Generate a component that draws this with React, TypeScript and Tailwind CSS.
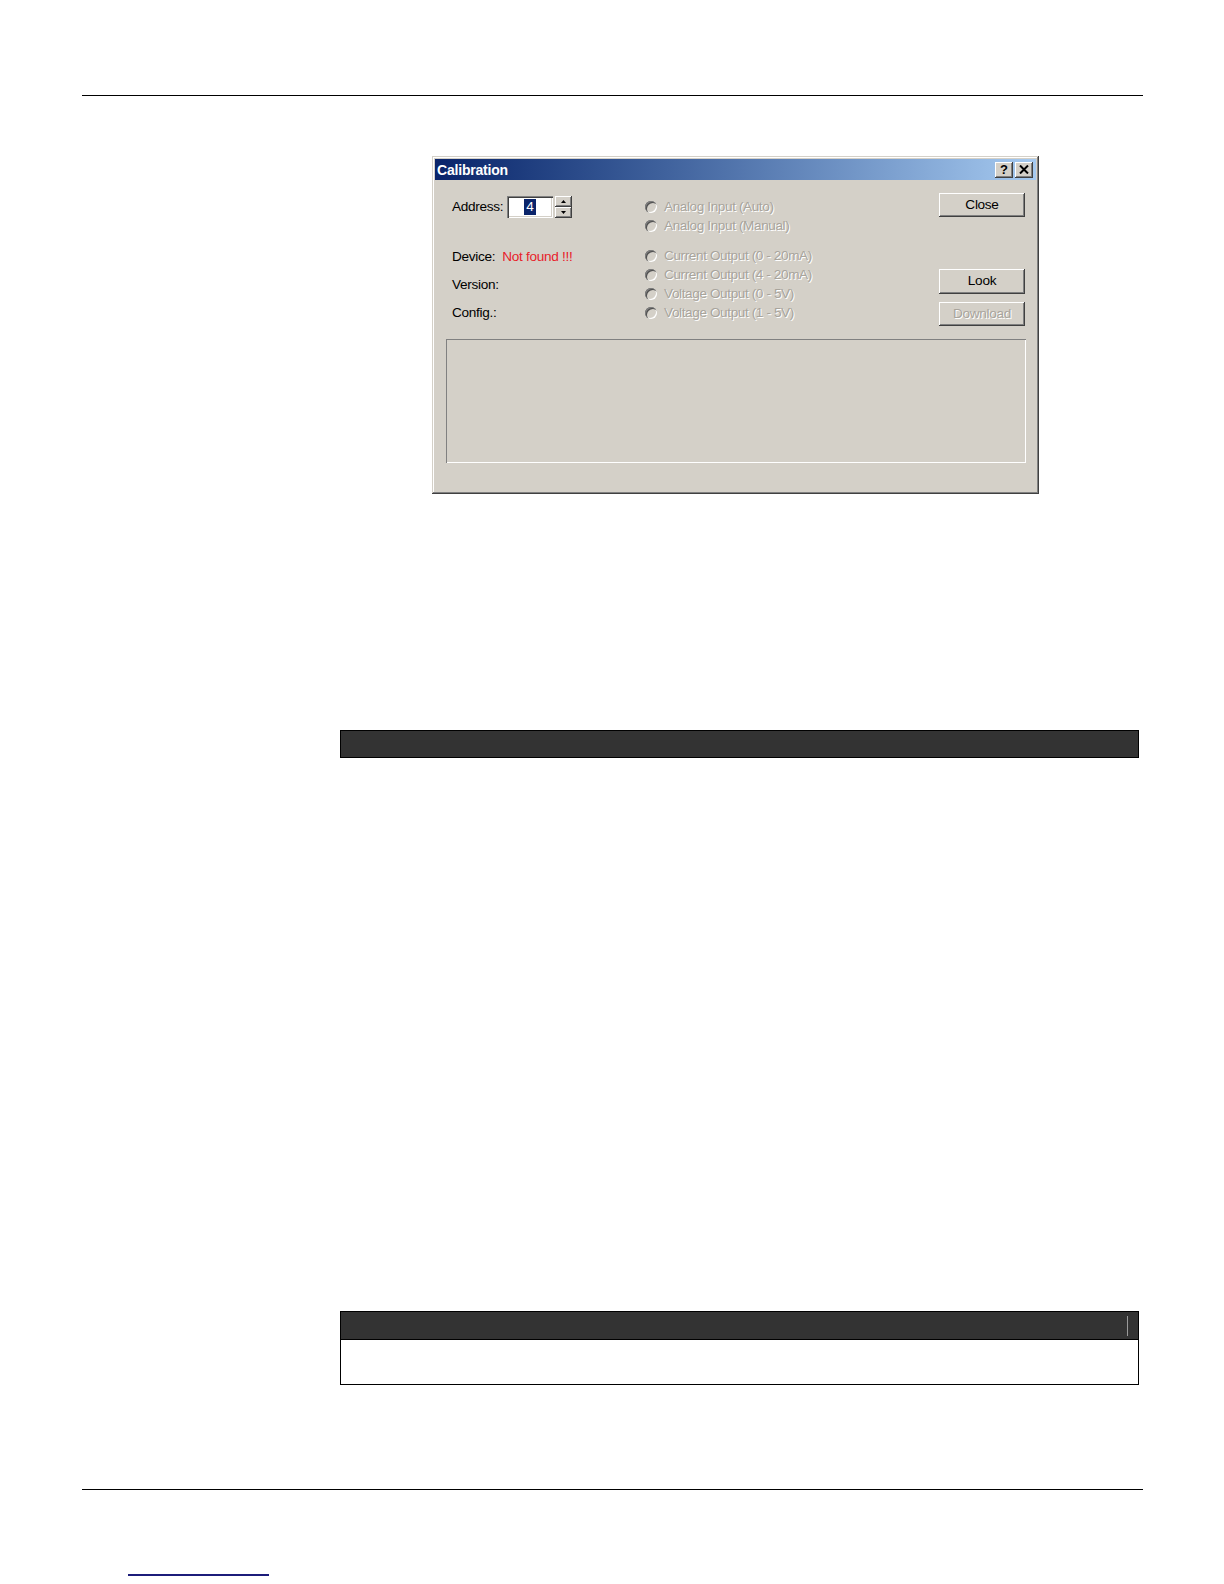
const RAISED =
  "shadow-[inset_-1px_-1px_#404040,inset_1px_1px_#ffffff,inset_-2px_-2px_#808080,inset_2px_2px_#d4d0c8]";

const RADIOS = [
  "Analog Input (Auto)",
  "Analog Input (Manual)",
  "Current Output (0 - 20mA)",
  "Current Output (4 - 20mA)",
  "Voltage Output (0 - 5V)",
  "Voltage Output (1 - 5V)",
];

function Radio({ label, className = "" }: { label: string; className?: string }) {
  return (
    <div className={`flex items-center h-[19px] gap-[7px] ${className}`}>
      <div className="w-[12px] h-[12px] rounded-full bg-[#d4d0c8] shadow-[inset_1px_1px_#808080,inset_2px_2px_#505050,inset_-1px_-1px_#ffffff]" />
      <span className="text-[13.6px] tracking-[-0.4px] leading-none text-[#a8a49c] [text-shadow:1px_1px_0_#ffffff]">
        {label}
      </span>
    </div>
  );
}

function WinButton({
  label,
  disabled,
  className = "",
}: {
  label: string;
  disabled?: boolean;
  className?: string;
}) {
  return (
    <div
      className={`w-[86px] h-[24px] bg-[#d4d0c8] flex items-center justify-center text-[13.6px] tracking-[-0.3px] ${RAISED} ${
        disabled ? "text-[#a8a49c] [text-shadow:1px_1px_0_#ffffff]" : "text-black"
      } ${className}`}
    >
      {label}
    </div>
  );
}

function CalibrationDialog() {
  return (
    <div className="mt-[60px] ml-[432px] w-[607px] h-[338px] bg-[#d4d0c8] p-[3px] flex flex-col shadow-[inset_-1px_-1px_#404040,inset_1px_1px_#d4d0c8,inset_-2px_-2px_#808080,inset_2px_2px_#ffffff]">
      {/* Title bar */}
      <div className="h-[21px] flex items-center justify-between pl-[2px] pr-[3px] bg-gradient-to-r from-[#0a246a] to-[#a6caf0]">
        <span className="text-white font-bold text-[14px] tracking-[-0.2px] leading-none">
          Calibration
        </span>
        <div className="flex gap-[2px]">
          <div
            className={`w-[18px] h-[16px] bg-[#d4d0c8] flex items-center justify-center text-[13px] font-bold leading-none ${RAISED}`}
          >
            ?
          </div>
          <div className={`w-[18px] h-[16px] bg-[#d4d0c8] flex items-center justify-center ${RAISED}`}>
            <svg width="10" height="9" viewBox="0 0 10 9">
              <path d="M1 0.5 L9 8.5 M9 0.5 L1 8.5" stroke="black" strokeWidth="2" />
            </svg>
          </div>
        </div>
      </div>

      {/* Controls */}
      <div className="h-[159px] flex items-start pl-[17px]">
        <div className="w-[193px] flex flex-col pt-[16px] text-[13.6px] tracking-[-0.3px] text-black">
          <div className="h-[22px] flex items-center">
            <span className="w-[55px]">Address:</span>
            <div className="w-[46px] h-[22px] bg-white flex items-center justify-center shadow-[inset_1px_1px_#808080,inset_2px_2px_#404040,inset_-1px_-1px_#ffffff,inset_-2px_-2px_#d4d0c8]">
              <span className="bg-[#0a246a] text-white px-[2px] leading-[16px]">4</span>
            </div>
            <div className="ml-[2px] w-[17px] h-[22px] flex flex-col">
              <div className={`h-[11px] bg-[#d4d0c8] flex items-center justify-center ${RAISED}`}>
                <svg width="5" height="3" viewBox="0 0 5 3">
                  <path d="M0 3 L2.5 0 L5 3 Z" fill="black" />
                </svg>
              </div>
              <div className={`h-[11px] bg-[#d4d0c8] flex items-center justify-center ${RAISED}`}>
                <svg width="5" height="3" viewBox="0 0 5 3">
                  <path d="M0 0 L2.5 3 L5 0 Z" fill="black" />
                </svg>
              </div>
            </div>
          </div>
          <div className="mt-[25px] h-[28px] flex items-center gap-[7px]">
            <span>Device:</span>
            <span className="text-[#e8202a]">Not found !!!</span>
          </div>
          <div className="h-[28px] flex items-center">Version:</div>
          <div className="h-[28px] flex items-center">Config.:</div>
        </div>

        <div className="w-[294px] flex flex-col pt-[17px]">
          <Radio label={RADIOS[0]} />
          <Radio label={RADIOS[1]} />
          <Radio label={RADIOS[2]} className="mt-[11px]" />
          <Radio label={RADIOS[3]} />
          <Radio label={RADIOS[4]} />
          <Radio label={RADIOS[5]} />
        </div>

        <div className="flex flex-col pt-[13px]">
          <WinButton label="Close" />
          <WinButton label="Look" className="mt-[52px] h-[25px]" />
          <WinButton label="Download" disabled className="mt-[8px]" />
        </div>
      </div>

      {/* Log frame */}
      <div className="ml-[11px] w-[580px] h-[124px] shadow-[inset_1px_1px_#808080,inset_-1px_-1px_#ffffff]" />
    </div>
  );
}

export default function App() {
  return (
    <div className="w-[1224px] h-[1584px] overflow-hidden bg-white flex flex-col font-['Liberation_Sans',Arial,sans-serif]">
      <div className="mt-[95px] ml-[82px] w-[1061px] h-px bg-black" />

      <CalibrationDialog />

      {/* Table header bar */}
      <div className="mt-[236px] ml-[340px] w-[799px] h-[28px] bg-[#333333] border border-black" />

      {/* Note box */}
      <div className="mt-[553px] ml-[340px] w-[799px] flex flex-col border border-black">
        <div className="h-[28px] bg-[#333333] border-b border-black flex items-center justify-end pr-[10px]">
          <div className="w-px h-[20px] bg-[#9a9a9a]" />
        </div>
        <div className="h-[44px] bg-white" />
      </div>

      <div className="mt-[104px] ml-[82px] w-[1061px] h-px bg-black" />

      <div className="mt-[84px] ml-[128px] w-[141px] h-[2px] bg-[#1c1c7a]" />
    </div>
  );
}
